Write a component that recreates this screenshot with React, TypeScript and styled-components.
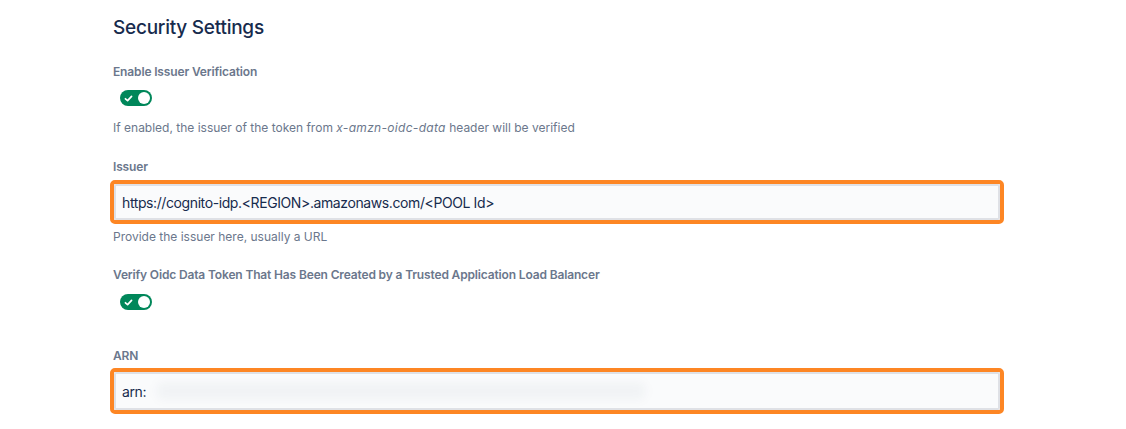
import React from "react";
import styled, { createGlobalStyle } from "styled-components";

const GlobalStyle = createGlobalStyle`
  html, body {
    margin: 0;
    padding: 0;
    background: #ffffff;
  }
  body {
    font-family: Inter, "Noto Sans", "Liberation Sans", sans-serif;
    -webkit-font-smoothing: antialiased;
  }
`;

const Page = styled.main`
  display: flex;
  flex-direction: column;
  padding: 16px 0 0 113px;
  width: 890px;
`;

const Heading = styled.h2`
  margin: 0;
  font-size: 19px;
  line-height: 24px;
  font-weight: 500;
  color: #172b4d;
  letter-spacing: -0.25px;
`;

const Field = styled.section<{ $top: number }>`
  display: flex;
  flex-direction: column;
  margin-top: ${(p) => p.$top}px;
`;

const Label = styled.label`
  font-size: 12px;
  line-height: 16px;
  font-weight: 600;
  color: #6b778c;
  letter-spacing: -0.15px;
`;

const Helper = styled.p<{ $top: number }>`
  margin: ${(p) => p.$top}px 0 0;
  font-size: 12px;
  line-height: 16px;
  font-weight: 400;
  color: #6b778c;

  em {
    font-style: italic;
    letter-spacing: 0.3px;
  }
`;

const ToggleTrack = styled.span<{ $top: number }>`
  display: inline-flex;
  align-items: center;
  justify-content: space-between;
  box-sizing: border-box;
  width: 32px;
  height: 16px;
  margin: ${(p) => p.$top}px 0 0 7px;
  padding: 0 2px 0 4px;
  border-radius: 16px;
  background: #00875a;
`;

const Knob = styled.span`
  width: 12px;
  height: 12px;
  border-radius: 50%;
  background: #ffffff;
`;

const Highlight = styled.div<{ $top: number; $height: number }>`
  box-sizing: border-box;
  width: 894px;
  height: ${(p) => p.$height}px;
  margin: ${(p) => p.$top}px 0 0 -3px;
  border: 4px solid #fd8624;
  border-radius: 5px;
  display: flex;
`;

const Input = styled.div`
  position: relative;
  flex: 1;
  display: flex;
  align-items: center;
  box-sizing: border-box;
  padding: 0 6px;
  border: 2px solid #dfe1e6;
  border-radius: 2px;
  background: #fafbfc;
  font-size: 14px;
  letter-spacing: -0.4px;
  color: #172b4d;
  overflow: hidden;
  white-space: nowrap;
`;

const Redacted = styled.span`
  position: absolute;
  left: 40px;
  top: 8px;
  width: 490px;
  height: 18px;
  background: rgba(9, 30, 66, 0.035);
  filter: blur(5px);
  border-radius: 8px;
`;

const CheckIcon = () => (
  <svg width="9" height="9" viewBox="0 0 10 10" aria-hidden="true">
    <path
      d="M1.6 5.3 L4 7.4 L8.4 2.6"
      fill="none"
      stroke="#ffffff"
      strokeWidth="1.9"
      strokeLinecap="round"
      strokeLinejoin="round"
    />
  </svg>
);

const Toggle = ({ top }: { top: number }) => (
  <ToggleTrack $top={top} role="switch" aria-checked="true">
    <CheckIcon />
    <Knob />
  </ToggleTrack>
);

export default function App() {
  return (
    <>
      <GlobalStyle />
      <Page>
        <Heading>Security Settings</Heading>

        <Field $top={24}>
          <Label>Enable Issuer Verification</Label>
          <Toggle top={10} />
          <Helper $top={14}>
            If enabled, the issuer of the token from <em>x-amzn-oidc-data</em>{" "}
            header will be verified
          </Helper>
        </Field>

        <Field $top={23}>
          <Label>Issuer</Label>
          <Highlight $top={5} $height={44}>
            <Input>https://cognito-idp.&lt;REGION&gt;.amazonaws.com/&lt;POOL Id&gt;</Input>
          </Highlight>
          <Helper $top={5}>Provide the issuer here, usually a URL</Helper>
        </Field>

        <Field $top={22}>
          <Label>
            Verify Oidc Data Token That Has Been Created by a Trusted Application
            Load Balancer
          </Label>
          <Toggle top={11} />
        </Field>

        <Field $top={38}>
          <Label>ARN</Label>
          <Highlight $top={4} $height={46}>
            <Input>
              arn:
              <Redacted />
            </Input>
          </Highlight>
        </Field>
      </Page>
    </>
  );
}
